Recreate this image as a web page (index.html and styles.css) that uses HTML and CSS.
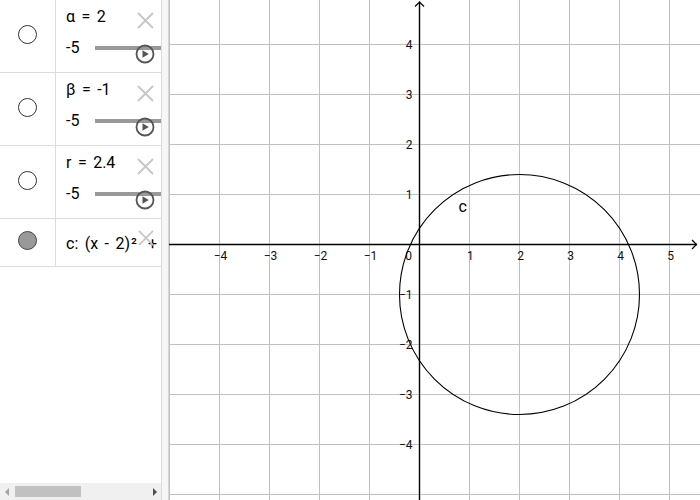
FILE: index.html
```html
<!DOCTYPE html>
<html>
<head>
<meta charset="utf-8">
<link rel="stylesheet" href="styles.css">
</head>
<body>
<div class="app">
  <div class="algebra">
    <div class="rows">
      <div class="row slider-row">
        <div class="marker"><span class="radio"></span></div>
        <div class="content">
          <div class="def">α = 2</div>
          <div class="slider"><span class="min">-5</span><span class="track"></span></div>
          <svg class="del" viewBox="0 0 17 17"><path d="M1 1L16 16M16 1L1 16"/></svg>
          <svg class="play" viewBox="0 0 20 20"><circle cx="10" cy="10" r="8.5"/><path d="M7.5 6.3L13.8 10L7.5 13.7Z"/></svg>
        </div>
      </div>
      <div class="row slider-row">
        <div class="marker"><span class="radio"></span></div>
        <div class="content">
          <div class="def">β = -1</div>
          <div class="slider"><span class="min">-5</span><span class="track"></span></div>
          <svg class="del" viewBox="0 0 17 17"><path d="M1 1L16 16M16 1L1 16"/></svg>
          <svg class="play" viewBox="0 0 20 20"><circle cx="10" cy="10" r="8.5"/><path d="M7.5 6.3L13.8 10L7.5 13.7Z"/></svg>
        </div>
      </div>
      <div class="row slider-row">
        <div class="marker"><span class="radio"></span></div>
        <div class="content">
          <div class="def">r = 2.4</div>
          <div class="slider"><span class="min">-5</span><span class="track"></span></div>
          <svg class="del" viewBox="0 0 17 17"><path d="M1 1L16 16M16 1L1 16"/></svg>
          <svg class="play" viewBox="0 0 20 20"><circle cx="10" cy="10" r="8.5"/><path d="M7.5 6.3L13.8 10L7.5 13.7Z"/></svg>
        </div>
      </div>
      <div class="row eq-row">
        <div class="marker"><span class="radio filled"></span></div>
        <div class="content">
          <div class="eq">c: (x - 2)<span class="sq">²</span>+ (y + 1)<span class="sq">²</span>= 5.76</div>
          <svg class="del del-eq" viewBox="0 0 17 17"><path d="M1 1L16 16M16 1L1 16"/></svg>
        </div>
      </div>
    </div>
    <div class="hscroll">
      <span class="arrow left"></span>
      <span class="thumb"></span>
      <span class="arrow right"></span>
    </div>
  </div>
  <div class="divider"></div>
  <svg class="graphics" viewBox="169 0 531 500" width="531" height="500">
    <path class="grid" d="M169.5 0V500M219.5 0V500M269.5 0V500M319.5 0V500M369.5 0V500M469.5 0V500M519.5 0V500M569.5 0V500M619.5 0V500M669.5 0V500M169 44.5H700M169 94.5H700M169 144.5H700M169 194.5H700M169 294.5H700M169 344.5H700M169 394.5H700M169 444.5H700M169 494.5H700"/>
    <path class="axis" d="M419.5 1.5V500M169 244.5H697"/>
    <path class="arrowhead" d="M415 6.5L419.5 2L424 6.5M692 240L696.5 244.5L692 249"/>
    <g class="axis-label">
      <text x="220.5" y="260" text-anchor="middle">−4</text>
      <text x="270.5" y="260" text-anchor="middle">−3</text>
      <text x="320.5" y="260" text-anchor="middle">−2</text>
      <text x="370.5" y="260" text-anchor="middle">−1</text>
      <text x="412" y="260" text-anchor="end">0</text>
      <text x="470.3" y="260" text-anchor="middle">1</text>
      <text x="520.5" y="260" text-anchor="middle">2</text>
      <text x="570.5" y="260" text-anchor="middle">3</text>
      <text x="620.5" y="260" text-anchor="middle">4</text>
      <text x="670.5" y="260" text-anchor="middle">5</text>
      <text x="412.5" y="48.5" text-anchor="end">4</text>
      <text x="412.5" y="98.5" text-anchor="end">3</text>
      <text x="412.5" y="148.5" text-anchor="end">2</text>
      <text x="412.5" y="198.8" text-anchor="end">1</text>
      <text x="412.5" y="298.5" text-anchor="end">−1</text>
      <text x="412.5" y="348.5" text-anchor="end">−2</text>
      <text x="412.5" y="398.5" text-anchor="end">−3</text>
      <text x="412.5" y="448.5" text-anchor="end">−4</text>
    </g>
    <circle class="curve" cx="519.5" cy="294.5" r="120"/>
    <text class="obj-label" x="458.5" y="212">c</text>
  </svg>
</div>
</body>
</html>
```

FILE: styles.css
```css
html, body {
  margin: 0;
  padding: 0;
  background: #fff;
}

.app {
  display: flex;
  width: 700px;
  height: 500px;
  overflow: hidden;
  font-family: Roboto, "Liberation Sans", sans-serif;
  color: #000;
}

.algebra {
  width: 161px;
  flex: none;
  border-right: 1px solid #dcdcdc;
  display: flex;
  flex-direction: column;
  justify-content: space-between;
  background: #fff;
}

.rows {
  display: flex;
  flex-direction: column;
}

.row {
  display: flex;
  border-bottom: 1px solid #dcdcdc;
}

.slider-row {
  height: 72px;
}

.eq-row {
  height: 47px;
}

.marker {
  width: 56px;
  flex: none;
  border-right: 1px solid #dcdcdc;
  display: flex;
  align-items: center;
  justify-content: center;
  padding-bottom: 4px;
  box-sizing: border-box;
}

.eq-row .marker {
  padding-bottom: 5px;
}

.radio {
  width: 17px;
  height: 17px;
  border: 1.2px solid #333;
  border-radius: 50%;
  background: #fff;
}

.radio.filled {
  background: #999;
  border-color: #444;
}

.content {
  flex: 1;
  position: relative;
  overflow: hidden;
  padding-left: 10px;
  min-width: 0;
  font-size: 16px;
  line-height: 20px;
  word-spacing: 2.5px;
}

.def {
  padding-top: 7px;
  white-space: nowrap;
}

.slider {
  display: flex;
  align-items: center;
  margin-top: 11px;
  height: 20px;
}

.min {
  flex: none;
}

.track {
  flex: 1;
  height: 4px;
  margin-left: 16px;
  background: #999;
}

.del {
  position: absolute;
  left: 81px;
  top: 12px;
  width: 17px;
  height: 17px;
}

.del path {
  stroke: #c6c6c6;
  stroke-width: 1.8;
  fill: none;
}

.del-eq {
  left: 82px;
  top: 11px;
  width: 16px;
  height: 16px;
}

.play {
  position: absolute;
  left: 79px;
  top: 44px;
  width: 20px;
  height: 20px;
}

.play circle {
  fill: none;
  stroke: #555;
  stroke-width: 1.8;
}

.play path {
  fill: #555;
}

.eq-row .content {
  display: flex;
  align-items: center;
}

.eq {
  white-space: nowrap;
  padding-top: 2px;
}

.sq {
  margin: 0 11px 0 1px;
}

.hscroll {
  height: 17px;
  background: #f0f0f0;
  display: flex;
  align-items: center;
  padding: 0 4px 0 5px;
}

.arrow {
  width: 0;
  height: 0;
  border-top: 4px solid transparent;
  border-bottom: 4px solid transparent;
}

.arrow.left {
  border-right: 4px solid #a3a3a3;
}

.arrow.right {
  border-left: 4px solid #505050;
  margin-left: auto;
}

.thumb {
  width: 66px;
  height: 11px;
  margin-left: 6px;
  background: #c1c1c1;
}

.divider {
  width: 6px;
  flex: none;
  background: #f6f6f6;
  border-right: 1px solid #d6d6d6;
}

.graphics {
  flex: none;
  display: block;
}

.grid {
  stroke: #c0c0c0;
  stroke-width: 1;
  fill: none;
}

.axis {
  stroke: #000;
  stroke-width: 1.4;
  fill: none;
}

.arrowhead {
  stroke: #000;
  stroke-width: 1.2;
  fill: none;
}

.axis-label text {
  font-family: Roboto, "Liberation Sans", sans-serif;
  font-size: 12px;
  fill: #111;
}

.curve {
  fill: none;
  stroke: #000;
  stroke-width: 1.1;
}

.obj-label {
  font-family: Roboto, "Liberation Sans", sans-serif;
  font-size: 16px;
  fill: #000;
}
```
